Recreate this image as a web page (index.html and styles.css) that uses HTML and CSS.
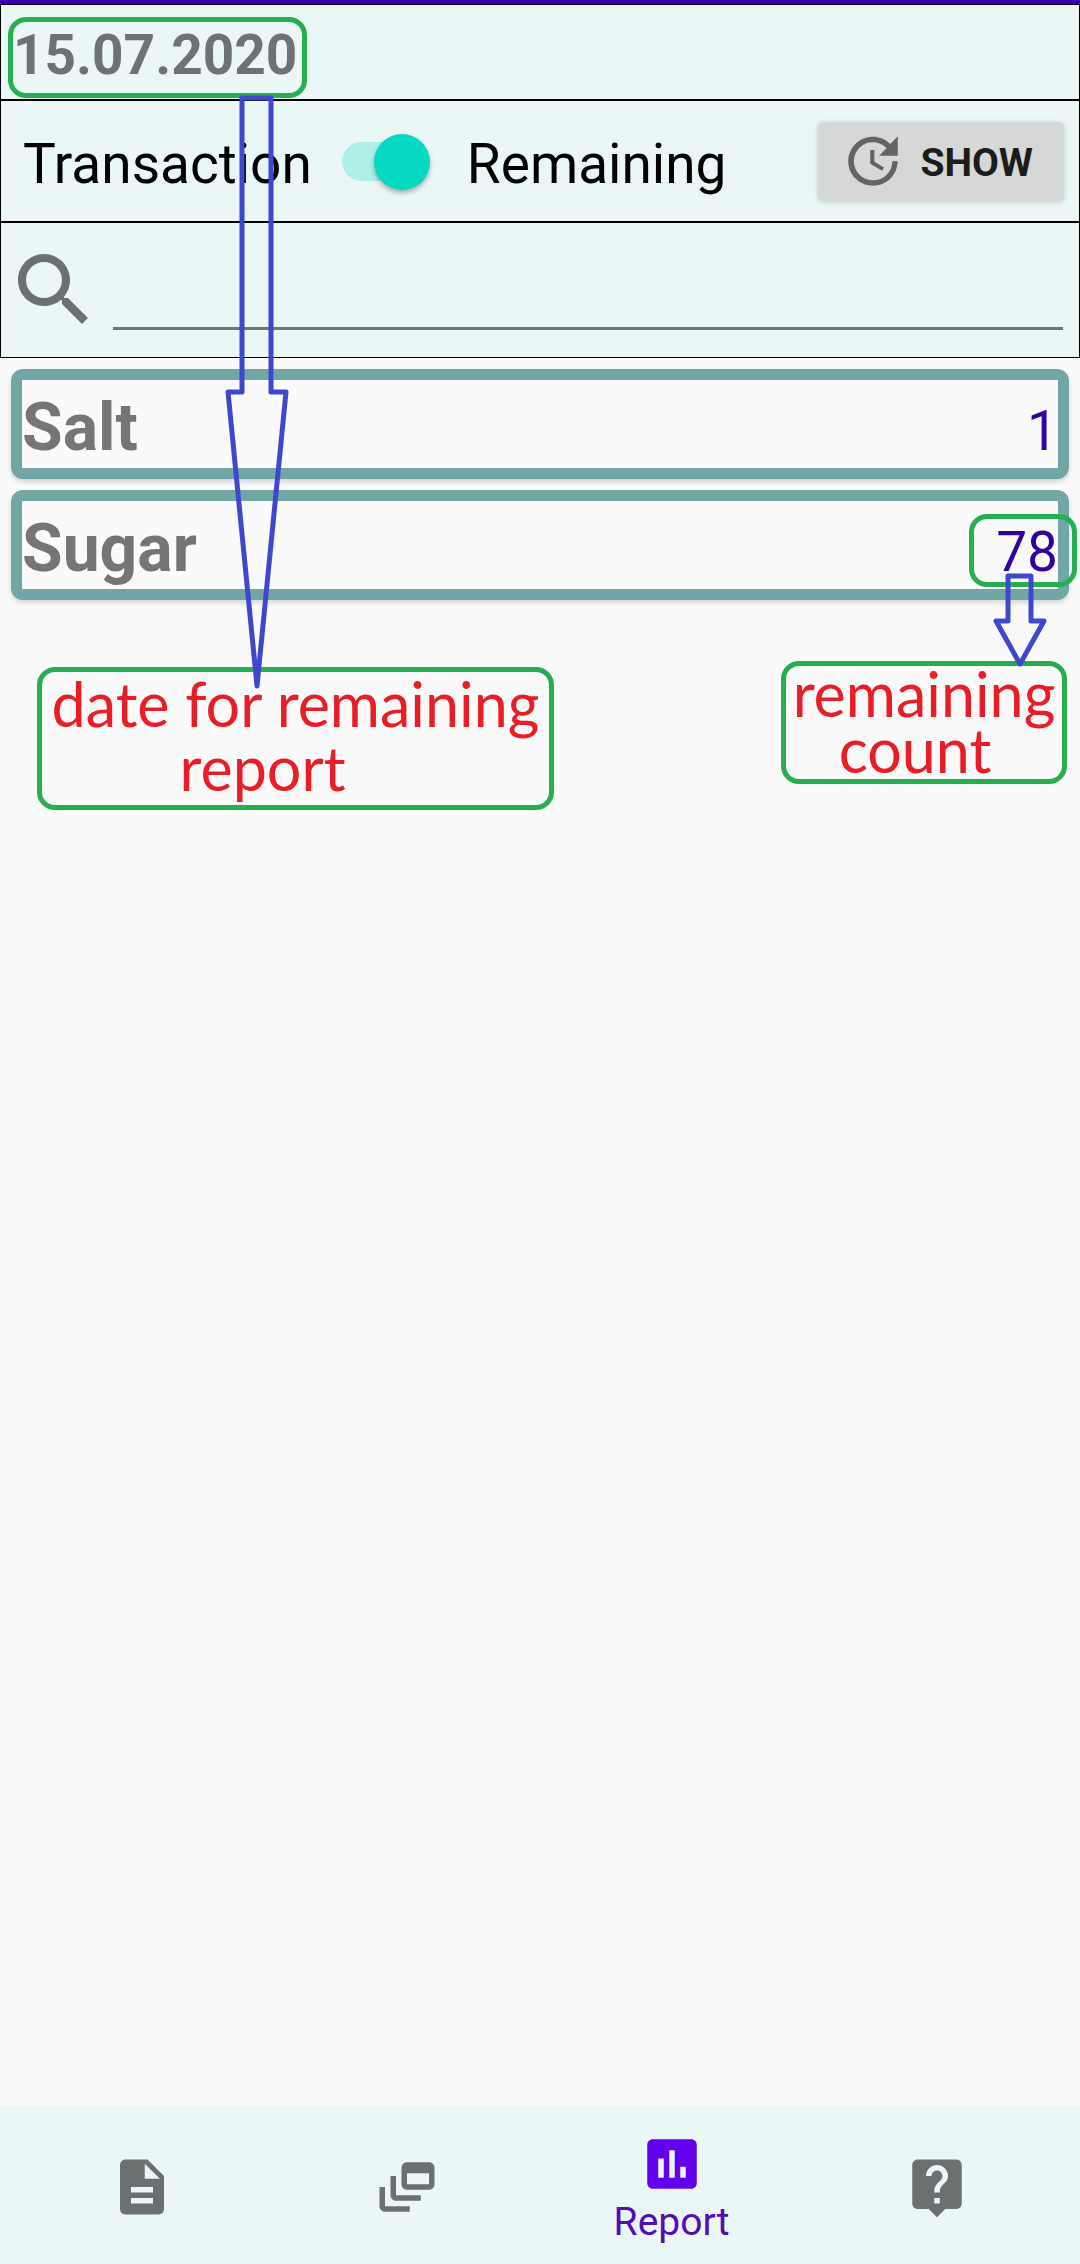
FILE: index.html
```html
<!DOCTYPE html>
<html lang="en">
<head>
<meta charset="utf-8">
<meta name="viewport" content="width=device-width, initial-scale=1">
<title>Report</title>
<link rel="stylesheet" href="styles.css">
</head>
<body>
<div class="screen">
  <header class="filters">
    <div class="date-row"><time class="date" datetime="2020-07-15">15.07.2020</time></div>
    <div class="mode-row">
      <label class="mode-label" for="mode">Transaction</label>
      <input class="switch" type="checkbox" role="switch" id="mode" checked>
      <label class="mode-label" for="mode">Remaining</label>
      <button class="show" type="button">
        <svg class="icon" viewBox="0 0 24 24" aria-hidden="true"><path d="M21 10.12h-6.78l2.74-2.82c-2.73-2.7-7.15-2.8-9.88-.1-2.73 2.71-2.73 7.08 0 9.79s7.15 2.71 9.88 0C18.32 15.65 19 14.08 19 12.1h2c0 1.98-.88 4.55-2.64 6.29-3.51 3.48-9.21 3.48-12.72 0-3.5-3.47-3.53-9.11-.02-12.58s9.14-3.47 12.65 0L21 3v7.12zM12.5 8v4.25l3.5 2.08-.72 1.21L11 13V8h1.5z"/></svg>
        <span class="show-label">SHOW</span>
      </button>
    </div>
    <div class="search-row">
      <label class="search-label" for="search" aria-label="Search">
        <svg class="search-icon" viewBox="0 0 24 24" aria-hidden="true"><path d="M15.5 14h-.79l-.28-.27C15.41 12.59 16 11.11 16 9.5 16 5.91 13.09 3 9.5 3S3 5.91 3 9.5 5.91 16 9.5 16c1.61 0 3.09-.59 4.23-1.57l.27.28v.79l5 4.99L20.49 19l-4.99-5zm-6 0C7.01 14 5 11.99 5 9.5S7.01 5 9.5 5 14 7.01 14 9.5 11.99 14 9.5 14z"/></svg>
      </label>
      <input class="search" type="text" id="search">
    </div>
  </header>

  <main class="content">
    <ul class="items">
      <li class="item"><div class="item-body"><span class="name">Salt</span><span class="count">1</span></div></li>
      <li class="item"><div class="item-body"><span class="name">Sugar</span><span class="count">78</span></div></li>
    </ul>
  </main>

  <nav class="tabs">
    <a class="tab" href="#documents" aria-label="Documents">
      <svg class="icon" viewBox="0 0 24 24" aria-hidden="true"><path d="M14 2H6c-1.1 0-1.99.9-1.99 2L4 20c0 1.1.89 2 1.99 2H18c1.1 0 2-.9 2-2V8l-6-6zm2 16H8v-2h8v2zm0-4H8v-2h8v2zm-3-5V3.500L18.500 9H13z"/></svg>
    </a>
    <a class="tab" href="#feed" aria-label="Feed">
      <svg class="icon" viewBox="0 0 24 24" aria-hidden="true"><path d="M8 8H6v7c0 1.100.9 2 2 2h9v-2H8V8zM20 3h-8c-1.100 0-2 .9-2 2v6c0 1.100.9 2 2 2h8c1.100 0 2-.9 2-2V5c0-1.100-.9-2-2-2zm0 8h-8V7h8v4zM4 12H2v7c0 1.100.9 2 2 2h9v-2H4v-7z"/></svg>
    </a>
    <a class="tab active" href="#report" aria-current="page">
      <svg class="icon" viewBox="0 0 24 24" aria-hidden="true"><path d="M19 3H5c-1.100 0-2 .9-2 2v14c0 1.100.9 2 2 2h14c1.100 0 2-.9 2-2V5c0-1.100-.9-2-2-2zM9 17H7v-7h2v7zm4 0h-2V7h2v10zm4 0h-2v-4h2v4z"/></svg>
      <span class="tab-label">Report</span>
    </a>
    <a class="tab" href="#help" aria-label="Help">
      <svg class="icon" viewBox="0 0 24 24" aria-hidden="true"><path d="M19 2H5c-1.110 0-2 .9-2 2v14c0 1.100.89 2 2 2h4l3 3 3-3h4c1.100 0 2-.9 2-2V4c0-1.100-.9-2-2-2zm-6 16h-2v-2h2v2zm2.070-7.750l-.9.920C13.450 11.900 13 12.500 13 14h-2v-.5c0-1.100.45-2.100 1.170-2.830l1.240-1.260c.37-.36.59-.86.59-1.410 0-1.100-.9-2-2-2s-2 .9-2 2H8c0-2.210 1.790-4 4-4s4 1.790 4 4c0 .88-.36 1.680-.93 2.250z"/></svg>
    </a>
  </nav>

  <div class="mark mark-date"></div>
  <div class="mark mark-count"></div>
  <p class="mark note note-date">date for remaining <span class="note-end">report</span></p>
  <p class="mark note note-count">remaining <span class="note-end">count</span></p>
  <svg class="arrow arrow-date" viewBox="0 0 64 600" aria-hidden="true"><path d="M17 5H46V299H61L32 593L3 299H17Z"/></svg>
  <svg class="arrow arrow-count" viewBox="0 0 54 98" aria-hidden="true"><path d="M15 4H38V49H51L27 92L3 49H15Z"/></svg>
</div>
</body>
</html>
```
FILE: styles.css
```css
* {
  box-sizing: border-box;
}

body {
  margin: 0;
  background: #fafafa;
  font-family: Roboto, sans-serif;
}

.screen {
  position: relative;
  display: flex;
  flex-direction: column;
  min-height: 100vh;
  border-top: 4px solid #3700b3;
}

.filters {
  border: 1px solid #000;
  background: #ebf7f7;
}

.date-row,
.mode-row {
  display: flex;
  align-items: center;
  border-bottom: 2px solid #000;
}

.date-row {
  height: 96px;
  padding: 6px 12px 0;
}

.date {
  color: #6d7373;
  font-size: 55px;
  font-weight: 700;
  line-height: 64px;
}

.mode-row {
  height: 122px;
  padding: 0 15px 0 22px;
}

.mode-label {
  padding-top: 6px;
  font-size: 55px;
  line-height: 64px;
}

.switch {
  appearance: none;
  position: relative;
  width: 88px;
  height: 39px;
  margin: 0 37px 0 30px;
  border-radius: 20px;
  background: #aef0e8;
}

.switch::before {
  content: "";
  position: absolute;
  top: -8px;
  right: 0;
  width: 56px;
  height: 56px;
  border-radius: 50%;
  background: #05d9c4;
  box-shadow: 0 3px 5px rgba(0, 0, 0, 0.3);
}

.show {
  display: flex;
  align-items: center;
  gap: 14px;
  height: 79px;
  margin-left: auto;
  padding: 0 31px 0 22px;
  border: 0;
  border-radius: 5px;
  background: #d6d7d7;
  box-shadow: 0 1px 5px rgba(0, 0, 0, 0.2);
  color: #1c1c1c;
  font-family: inherit;
  font-size: 39px;
  font-weight: 700;
}

.show-label {
  padding-top: 3px;
}

.icon {
  width: 66px;
  height: 66px;
  fill: #6b7171;
}

.show .icon {
  fill: #636564;
}

.search-row {
  display: flex;
  align-items: flex-start;
  gap: 11px;
  height: 134px;
  padding: 19px 16px 0 5px;
}

.search-label {
  display: flex;
}

.search-icon {
  width: 96px;
  height: 96px;
  fill: #6b7171;
}

.search {
  flex: 1;
  min-width: 0;
  height: 88px;
  border: 0;
  border-bottom: 3px solid #6f7575;
  outline: 0;
  background: transparent;
  font: 50px Roboto, sans-serif;
}

.content {
  flex: 1;
  padding: 11px;
}

.items {
  display: flex;
  flex-direction: column;
  gap: 11px;
  margin: 0;
  padding: 0;
  list-style: none;
}

.item {
  padding: 11px;
  border-radius: 12px;
  background: #71a6a5;
  box-shadow: 0 3px 5px rgba(0, 0, 0, 0.15);
}

.item-body {
  display: flex;
  align-items: baseline;
  justify-content: space-between;
  height: 88px;
  padding: 9px 0 0;
  background: #fafafa;
}

.name {
  color: #757575;
  font-size: 66px;
  font-weight: 700;
  line-height: 78px;
}

.count {
  color: #31039b;
  font-size: 55px;
}

.tabs {
  display: grid;
  grid-template-columns: repeat(4, 1fr);
  height: 156px;
  padding: 2px 11px 0 9px;
  background: #ebf7f7;
  box-shadow: 0 -1px 4px rgba(120, 0, 0, 0.06);
}

.tab {
  display: flex;
  flex-direction: column;
  align-items: center;
  justify-content: center;
  text-decoration: none;
}

.tab-label {
  padding-top: 3px;
  color: #540cb4;
  font-size: 39px;
  line-height: 44px;
}

.active .icon {
  fill: #6200ee;
}

/* Help marks drawn over the screen */
.mark {
  position: absolute;
  margin: 0;
  border: 5px solid #27ae4f;
  border-radius: 18px;
}

.mark-date {
  top: 13px;
  left: 8px;
  width: 299px;
  height: 81px;
}

.mark-count {
  top: 510px;
  right: 3px;
  width: 108px;
  height: 73px;
}

.note {
  color: #e81d25;
  font-family: Lato, sans-serif;
  font-size: 61px;
  text-align: center;
  white-space: nowrap;
}

.note-end {
  display: block;
}

.note-date {
  top: 663px;
  left: 37px;
  width: 517px;
  height: 143px;
  line-height: 64px;
}

.note-date .note-end {
  padding-right: 66px;
}

.note-count {
  top: 657px;
  right: 13px;
  width: 286px;
  height: 123px;
  line-height: 56px;
}

.note-count .note-end {
  padding-right: 18px;
}

.arrow {
  position: absolute;
  fill: none;
  stroke: #3f48cc;
  stroke-width: 5px;
  stroke-linejoin: round;
}

.arrow-date {
  top: 89px;
  left: 225px;
  width: 64px;
  height: 600px;
}

.arrow-count {
  top: 568px;
  right: 33px;
  width: 54px;
  height: 98px;
}
```
